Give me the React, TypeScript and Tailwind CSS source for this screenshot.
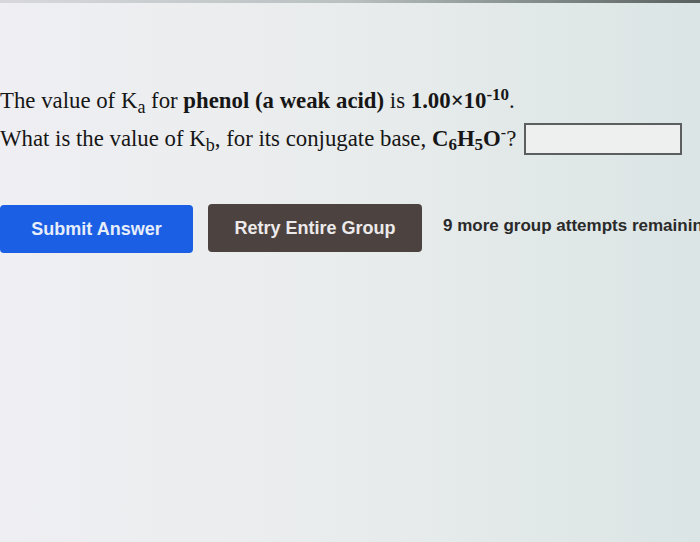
import React from "react";

export default function App() {
  const serif = { fontFamily: '"Liberation Serif", "Times New Roman", serif' };
  const sans = { fontFamily: '"Liberation Sans", Arial, sans-serif' };
  return (
    <div className="relative w-[700px] h-[542px] overflow-hidden bg-gradient-to-r from-[#efeff3] via-[#e9ecec] to-[#dbe5e5]">
      <div className="h-[3px] w-full bg-gradient-to-r from-[#d8d8dc] via-[#b8c0c0] to-[#5a6060]" />
      <div className="pt-[79px] text-[22.8px] leading-[38px] text-[#161616]" style={serif}>
        <div className="whitespace-nowrap">
          The value of K<sub className="text-[18px]">a</sub> for{" "}
          <b>phenol (a weak acid)</b> is <b>1.00×10</b>
          <sup className="text-[17px] font-bold">-10</sup>.
        </div>
        <div className="flex items-center whitespace-nowrap">
          <span>
            What is the value of K<sub className="text-[18px]">b</sub>, for its conjugate base,{" "}
            <b>C</b>
            <sub className="text-[17px] font-bold">6</sub>
            <b>H</b>
            <sub className="text-[17px] font-bold">5</sub>
            <b>O</b>
            <sup className="text-[16px]">-</sup>?
          </span>
          <div className="ml-[8px] h-[32px] w-[158px] shrink-0 border-2 border-[#5c5f60] bg-[#eef0f0]" />
        </div>
      </div>
      <div className="mt-[46px] flex items-start" style={sans}>
        <div className="mt-[1px] flex h-[48px] w-[193px] shrink-0 items-center justify-center rounded-[4px] bg-[#1b5fe4] text-[18px] font-bold text-[#e6eefb]">
          Submit Answer
        </div>
        <div className="ml-[15px] flex h-[48px] w-[214px] shrink-0 items-center justify-center rounded-[4px] bg-[#4c4340] text-[18px] font-bold text-[#eceaea]">
          Retry Entire Group
        </div>
        <div className="ml-[21px] mt-[9px] shrink-0 whitespace-nowrap text-[17px] font-bold text-[#2a2a2a]">
          9 more group attempts remaining
        </div>
      </div>
    </div>
  );
}
